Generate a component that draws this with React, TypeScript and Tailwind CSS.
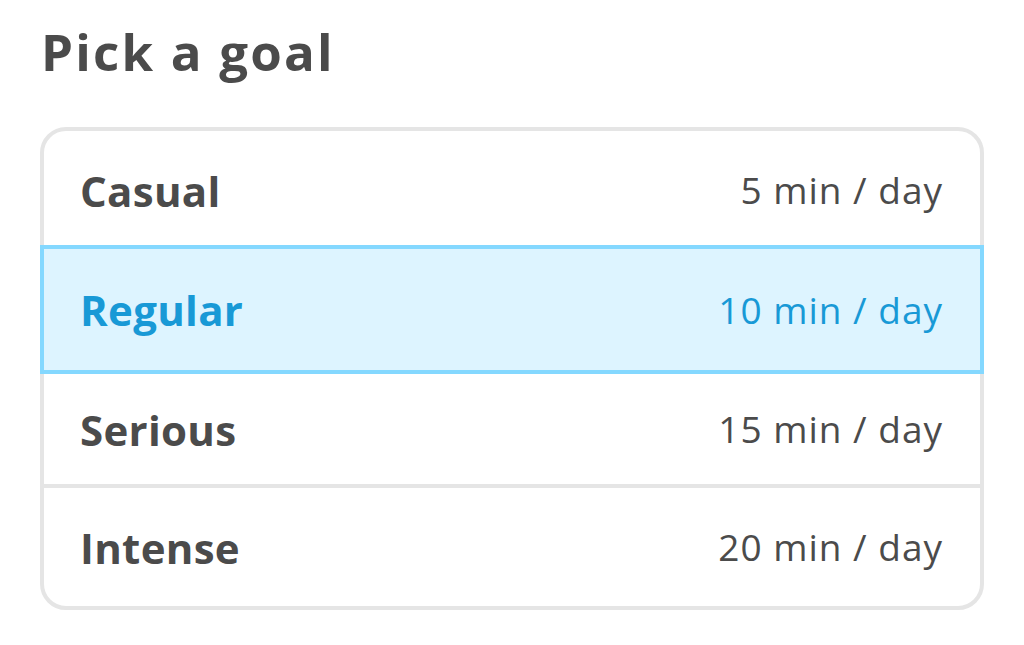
import React from "react";

export default function App() {
  return (
    <div
      className="w-[1024px] h-[645px] bg-white text-[#4b4b4b] pl-[40px] pr-[40px] pt-[22px]"
      style={{ fontFamily: '"Open Sans", "Noto Sans", sans-serif' }}
    >
      <h1 className="text-[51px] font-bold leading-[58px] pl-[1px] tracking-[2.2px]">Pick a goal</h1>
      <div className="mt-[47px] border-4 border-[#e5e5e5] rounded-[26px] flex flex-col">
        <div className="h-[114px] flex items-center justify-between pl-[36px] pr-[37px] pt-[4px]">
          <span className="text-[42px] font-bold tracking-[0.3px]">Casual</span>
          <span className="text-[37px] tracking-[1px]">5 min / day</span>
        </div>
        <div className="h-[129px] -mx-[4px] border-4 border-[#84d8ff] bg-[#ddf4ff] text-[#1899d6] flex items-center justify-between pl-[36px] pr-[37px]">
          <span className="text-[42px] font-bold tracking-[0.3px]">Regular</span>
          <span className="text-[37px] tracking-[1px]">10 min / day</span>
        </div>
        <div className="h-[114px] border-b-4 border-[#e5e5e5] flex items-center justify-between pl-[36px] pr-[37px]">
          <span className="text-[42px] font-bold tracking-[0.3px]">Serious</span>
          <span className="text-[37px] tracking-[1px]">15 min / day</span>
        </div>
        <div className="h-[118px] flex items-center justify-between pl-[36px] pr-[37px]">
          <span className="text-[42px] font-bold tracking-[0.3px]">Intense</span>
          <span className="text-[37px] tracking-[1px]">20 min / day</span>
        </div>
      </div>
    </div>
  );
}
